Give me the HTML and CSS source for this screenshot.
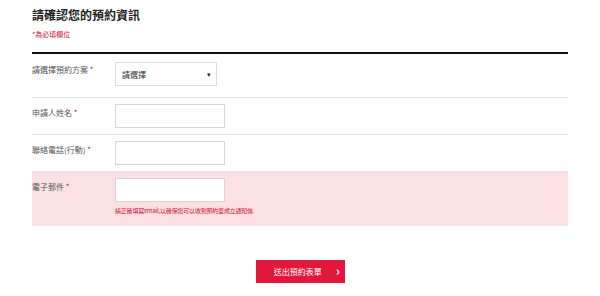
FILE: index.html
```html
<!DOCTYPE html>
<html lang="zh-Hant">
<head>
<meta charset="utf-8">
<link rel="stylesheet" href="styles.css">
</head>
<body>
<div class="wrap">
  <h1 class="title">請確認您的預約資訊</h1>
  <p class="note">*為必填欄位</p>
  <div class="form">
    <div class="row r1">
      <label class="lbl">請選擇預約方案 <span class="req">*</span></label>
      <div class="field"><div class="select"><span>請選擇</span><span class="arrow">▾</span></div></div>
    </div>
    <div class="row r2">
      <label class="lbl">申請人姓名 <span class="req">*</span></label>
      <div class="field"><div class="input"></div></div>
    </div>
    <div class="row r3">
      <label class="lbl">聯絡電話(行動) <span class="req">*</span></label>
      <div class="field"><div class="input"></div></div>
    </div>
    <div class="row r4 error">
      <label class="lbl">電子郵件 <span class="req">*</span></label>
      <div class="field">
        <div class="input"></div>
        <p class="errmsg">請正確填寫email,以確保您可以收到預約單成立通知信.</p>
      </div>
    </div>
  </div>
</div>
<div class="actions">
  <button class="submit"><span>送出預約表單</span><span class="chev">›</span></button>
</div>
</body>
</html>
```
FILE: styles.css
```css
* { box-sizing: border-box; }
body { margin: 0; background: #fff; font-family: "Noto Sans CJK TC", "Noto Sans", sans-serif; color: #444; }
.wrap { width: 536px; margin-left: 32px; }
.title { margin: 0; padding-top: 7px; font-size: 12px; line-height: 16px; font-weight: 700; color: #222; height: 25px; }
.note { margin: 4px 0 0; font-size: 7px; line-height: 10px; color: #d0102b; height: 23px; }
.form { border-top: 2px solid #111; }
.row { display: flex; border-bottom: 1px solid #e6e6e6; }
.lbl { width: 83px; font-size: 8px; line-height: 10px; color: #555; padding-top: 10px; }
.req { color: #c8102e; }
.r1 { height: 44px; }
.r1 .lbl { padding-top: 11px; }
.r1 .field { padding-top: 8px; }
.r2, .r3 { height: 37px; }
.r4 { height: 54px; border-bottom: none; }
.error { background: #fde0e4; }
.select { width: 102px; height: 24px; border: 1px solid #ddd; background: #fff; display: flex; align-items: center; justify-content: space-between; padding: 0 5px 0 6px; font-size: 8px; color: #333; }
.arrow { font-size: 7px; color: #222; }
.input { width: 110px; height: 24px; border: 1px solid #d6d6d6; background: #fff; }
.r2 .field, .r3 .field, .r4 .field { padding-top: 6px; }
.errmsg { margin: 4px 0 0; font-size: 6px; line-height: 9px; color: #c8102e; letter-spacing: -0.2px; white-space: nowrap; }
.actions { display: flex; justify-content: center; margin-top: 34px; }
.submit { width: 89px; height: 23px; background: #e3173c; border: none; color: #fff; font-family: inherit; font-size: 8px; display: flex; align-items: center; justify-content: flex-end; padding: 0 5px 0 0; gap: 14px; margin-left: 1px; }
.chev { font-size: 13px; font-weight: 700; line-height: 1; margin-top: -2px; }
```
